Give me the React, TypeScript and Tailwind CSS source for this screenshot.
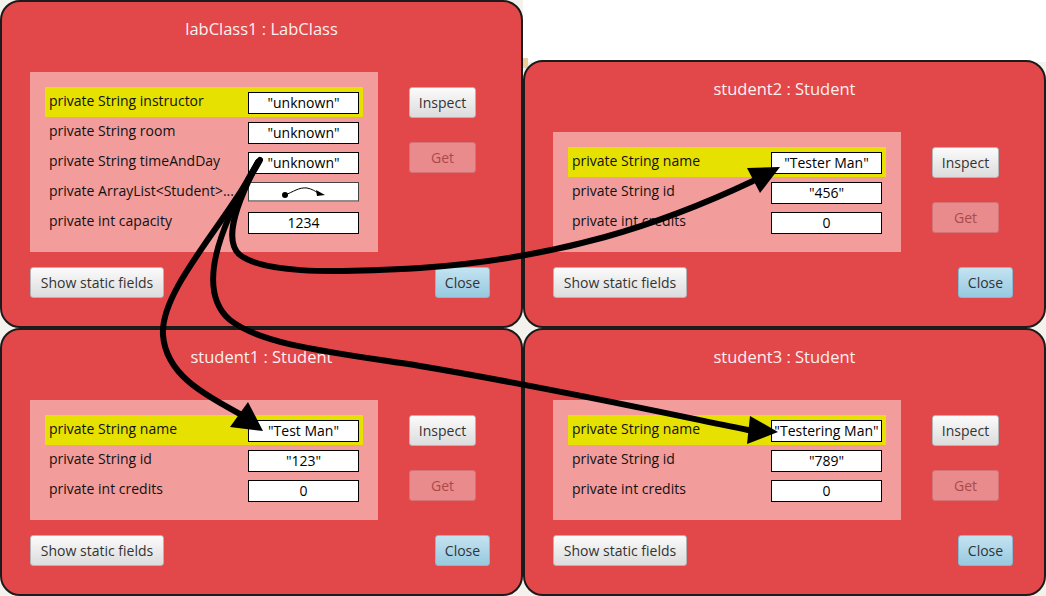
import React from 'react';

interface Field {
  label: string;
  value: string;
  highlight?: boolean;
  reference?: boolean;
}

interface InspectorProps {
  title: string;
  fields: Field[];
  className: string;
}

function RefArrow() {
  return (
    <svg width="46" height="14" viewBox="0 0 46 14">
      <circle cx="4" cy="10" r="3" fill="#000" />
      <path d="M4 10 C 12 7, 18 2, 26 3 C 31 4, 34 6, 37 8" fill="none" stroke="#000" strokeWidth="1" />
      <polygon points="35,5 36,11 44,10" fill="#000" />
    </svg>
  );
}

function Inspector({ title, fields, className }: InspectorProps) {
  return (
    <div className={`absolute flex flex-col rounded-[20px] border-2 border-[#1b1b1b] bg-[#e2474a] ${className}`}>
      <div className="pt-[16px] text-center text-[16.5px] leading-[22px] text-[#fcf0f0]">{title}</div>

      <div className="mt-[32px] flex pl-[28px]">
        <div className="w-[348px] bg-[#f39c9c] p-[15px]">
          {fields.map((field) => (
            <div
              key={field.label}
              className={`flex h-[30px] items-center pl-[4px] pr-[4px] ${field.highlight ? 'bg-[#e6e100]' : ''}`}
            >
              <span className="w-[199px] overflow-hidden whitespace-nowrap pb-[3px] text-[14px] text-[#111]">
                {field.label}
              </span>
              {field.reference ? (
                <div className="flex h-[20px] w-[111px] items-center justify-center border border-b-2 border-[#444] border-b-[#8c8c8c] bg-white">
                  <RefArrow />
                </div>
              ) : (
                <div className="mt-[2px] flex h-[22px] w-[111px] items-center justify-center overflow-hidden whitespace-nowrap border border-black bg-white text-[14px] leading-none text-black">
                  {field.value}
                </div>
              )}
            </div>
          ))}
        </div>

        <div className="ml-[31px] flex flex-col pt-[15px]">
          <button className="h-[31px] w-[67px] rounded-[3px] border border-[#b4b4b4] bg-gradient-to-b from-[#fbfbfb] to-[#dcdcdc] text-[14px] text-[#333]">
            Inspect
          </button>
          <button className="mt-[24px] h-[31px] w-[67px] rounded-[3px] border border-[#d67274] bg-[#e98b8c] text-[14px] text-[#a94a4b]">
            Get
          </button>
        </div>
      </div>

      <div className="mt-[15px] flex justify-between pl-[28px] pr-[31px]">
        <button className="h-[31px] w-[134px] rounded-[3px] border border-[#b4b4b4] bg-gradient-to-b from-[#fbfbfb] to-[#dcdcdc] text-[14px] text-[#333]">
          Show static fields
        </button>
        <button className="h-[31px] w-[55px] rounded-[3px] border border-[#86b8d0] bg-gradient-to-b from-[#c3e3f1] to-[#98c9e0] text-[14px] text-[#333]">
          Close
        </button>
      </div>
    </div>
  );
}

const labClassFields: Field[] = [
  { label: 'private String instructor', value: '"unknown"', highlight: true },
  { label: 'private String room', value: '"unknown"' },
  { label: 'private String timeAndDay', value: '"unknown"' },
  { label: 'private ArrayList<Student>...', value: '', reference: true },
  { label: 'private int capacity', value: '1234' },
];

function studentFields(name: string, id: string): Field[] {
  return [
    { label: 'private String name', value: name, highlight: true },
    { label: 'private String id', value: id },
    { label: 'private int credits', value: '0' },
  ];
}

export default function App() {
  return (
    <div className="relative h-[596px] w-[1046px] overflow-hidden bg-[#f3f2ec] font-['Open_Sans',sans-serif]">
      <div className="absolute left-[523px] top-0 h-[62px] w-[523px] bg-white" />
      <div className="absolute left-[518px] top-[58px] h-[10px] w-[10px] bg-[#e9cf9e]" />

      <Inspector title="labClass1 : LabClass" fields={labClassFields} className="left-0 top-0 h-[328px] w-[523px]" />
      <Inspector
        title="student2 : Student"
        fields={studentFields('"Tester Man"', '"456"')}
        className="left-[523px] top-[60px] h-[268px] w-[523px]"
      />
      <Inspector
        title="student1 : Student"
        fields={studentFields('"Test Man"', '"123"')}
        className="left-0 top-[328px] h-[268px] w-[523px]"
      />
      <Inspector
        title="student3 : Student"
        fields={studentFields('"Testering Man"', '"789"')}
        className="left-[523px] top-[328px] h-[268px] w-[523px]"
      />

      {/* hand-drawn reference arrows */}
      <svg className="pointer-events-none absolute left-0 top-0" width="1046" height="596" viewBox="0 0 1046 596">
        <g fill="none" stroke="#000" strokeWidth="6" strokeLinecap="round">
          <path d="M260 160 C 225 225, 160 290, 163 335 C 166 375, 205 395, 240 414" />
          <path d="M258 162 C 238 200, 222 240, 240 255 C 262 272, 320 274, 420 268 C 560 258, 660 225, 753 181" />
          <path d="M258 162 C 220 225, 195 290, 230 320 C 262 345, 330 352, 420 366 C 540 386, 650 410, 748 430" />
        </g>
        <g fill="#000">
          <polygon points="263,431 248,402 230,427" />
          <polygon points="780,167 747,168 760,193" />
          <polygon points="778,432 750,416 747,444" />
        </g>
      </svg>
    </div>
  );
}
